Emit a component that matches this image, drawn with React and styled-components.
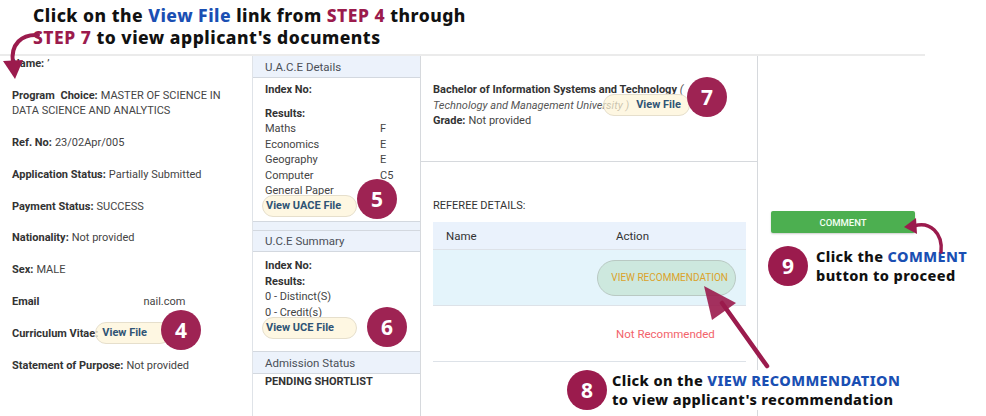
import styled, { createGlobalStyle } from "styled-components";

const GlobalStyle = createGlobalStyle`
  html, body {
    margin: 0;
    padding: 0;
    background: #ffffff;
  }
  * {
    box-sizing: border-box;
  }
`;

const MAROON = "#9b1b4d";
const BLUE = "#1a4fb3";

const Page = styled.div`
  position: relative;
  width: 986px;
  height: 416px;
  overflow: hidden;
  background: #fff;
  font-family: Roboto, "Liberation Sans", sans-serif;
  color: #333;
`;

const Heading = styled.div`
  height: 54px;
  padding: 4px 0 0 33px;
  font-family: "Noto Sans", "Open Sans", sans-serif;
  font-weight: 800;
  font-size: 17.5px;
  line-height: 22px;
  color: #111;
  letter-spacing: 0.5px;
  white-space: nowrap;
`;

const Hl = styled.span`
  color: ${(p) => (p.tone === "blue" ? BLUE : MAROON)};
`;

const Columns = styled.div`
  display: grid;
  grid-template-columns: 252px 169px 337px 167px;
  width: 925px;
  height: 362px;
  border-top: 2px solid #ebebeb;
`;

const InfoCol = styled.div`
  padding: 0 12px;
  font-size: 11px;
`;

const InfoRow = styled.div`
  line-height: 15.5px;
  margin-bottom: 16.3px;
`;

const Label = styled.b`
  font-weight: 700;
  color: #333;
  word-spacing: ${(p) => p.$ws || 0}px;
`;

const Value = styled.span`
  color: #444;
  margin-left: ${(p) => p.$ml || 3}px;
`;

const Pill = styled.span`
  display: inline-block;
  vertical-align: middle;
  height: 22px;
  line-height: 20px;
  margin: -4px 0 -3px ${(p) => p.$ml || 0}px;
  padding: 0 8px 0 ${(p) => p.$pad || 6}px;
  min-width: ${(p) => p.$w || 0}px;
  white-space: nowrap;
  border-radius: 11px;
  background: rgba(253, 243, 214, 0.7);
  border: 1px solid #e6dfcc;
  font-weight: 700;
  font-style: normal;
  color: #2f5475;
  font-size: 11px;
`;

const MidCol = styled.div`
  background: #ecf2fb;
  border-left: 1px solid #dfe3e8;
  border-right: 1px solid #d6d9dd;
  display: flex;
  flex-direction: column;
`;

const SectionHead = styled.div`
  flex: none;
  height: 22px;
  padding: 0 12px;
  display: flex;
  align-items: center;
  font-size: 11.5px;
  color: #4a4f57;
  border-bottom: 1px solid #d3d8df;
  border-top: ${(p) => (p.$top ? "1px solid #d3d8df" : "none")};
`;

const SectionBody = styled.div`
  flex: none;
  background: #fff;
  padding: ${(p) => p.$pt || 4}px 12px 0 12px;
  height: ${(p) => p.$h}px;
  font-size: 11px;
  line-height: 15.5px;
  color: #444;
  border-bottom: ${(p) => (p.$bottom ? "1px solid #d3d8df" : "none")};
  margin-bottom: ${(p) => p.$mb || 0}px;
`;

const Bold = styled.div`
  font-weight: 700;
  color: #333;
  margin-bottom: ${(p) => p.$mb || 0}px;
`;

const GradeGrid = styled.div`
  display: grid;
  grid-template-columns: 115px auto;
`;

const Status = styled.div`
  background: #fff;
  flex: 1;
  padding: 1px 12px;
  font-size: 11px;
  font-weight: 700;
  color: #333;
`;

const DetailCol = styled.div`
  border-right: 1px solid #d6d9dd;
  display: flex;
  flex-direction: column;
`;

const Qualification = styled.div`
  height: 106px;
  padding: 26px 12px 0 12px;
  font-size: 11px;
  line-height: 15.5px;
  color: #444;
  border-bottom: 1px solid #d6d9dd;
`;

const Italic = styled.span`
  font-style: italic;
  color: #555;
`;

const Referees = styled.div`
  padding: 36px 11px 0 12px;
  font-size: 11px;
`;

const RefTitle = styled.div`
  color: #333;
  margin-bottom: 8px;
  line-height: 16px;
`;

const Table = styled.div`
  display: flex;
  flex-direction: column;
`;

const TRow = styled.div`
  display: grid;
  grid-template-columns: 170px 1fr;
  align-items: center;
  height: ${(p) => p.$h}px;
  background: ${(p) => p.$bg || "#fff"};
  border-bottom: 1px solid #dde2e8;
  padding-left: 13px;
  font-size: 11.5px;
  color: #333;
`;

const RecButton = styled.span`
  display: inline-flex;
  align-items: center;
  justify-content: flex-end;
  margin-left: -19px;
  width: 139px;
  height: 36px;
  padding-right: 7px;
  border-radius: 18px;
  background: #cde8de;
  border: 1px solid #b9c9c3;
  color: #dba22a;
  font-size: 10px;
`;

const NotRec = styled.span`
  color: #f2636b;
  font-size: 11.5px;
`;

const ActionCol = styled.div`
  padding: 155px 0 0 10px;
  display: flex;
  flex-direction: column;
`;

const CommentButton = styled.button`
  width: 144px;
  height: 22px;
  margin-left: 3px;
  border: none;
  border-radius: 2px;
  background: #4caf50;
  color: #f4fff4;
  font-family: Roboto, "Liberation Sans", sans-serif;
  font-size: 9.5px;
  font-weight: 500;
  box-shadow: 0 1px 2px rgba(0, 0, 0, 0.2);
`;

const Step = styled.div`
  display: flex;
  align-items: center;
  gap: 8px;
  margin-top: 13px;
  white-space: nowrap;
`;

const Circle = styled.div`
  flex: none;
  width: 40px;
  height: 40px;
  border-radius: 50%;
  background: ${MAROON};
  color: #fff;
  display: flex;
  align-items: center;
  justify-content: center;
  font-family: "Noto Sans", "Open Sans", sans-serif;
  font-weight: 700;
  font-size: 21px;
`;

const Badge = styled(Circle)`
  position: absolute;
  left: ${(p) => p.$x - 20}px;
  top: ${(p) => p.$y - 20}px;
  opacity: 0.96;
`;

const Note = styled.div`
  font-family: "Noto Sans", "Open Sans", sans-serif;
  font-weight: 800;
  font-size: 14.5px;
  letter-spacing: 0.4px;
  line-height: 19px;
  color: #111;
  white-space: nowrap;
`;

const BottomNote = styled.div`
  position: absolute;
  left: 567px;
  top: 370px;
  display: flex;
  align-items: center;
  gap: 5px;
  background: #fff;
`;

const Arrows = styled.svg`
  position: absolute;
  left: 0;
  top: 0;
  pointer-events: none;
`;

export default function App() {
  return (
    <Page>
      <GlobalStyle />
      <Heading>
        Click on the <Hl tone="blue">View File</Hl> link from <Hl>STEP 4</Hl> through
        <br />
        <Hl>STEP 7</Hl> to view applicant's documents
      </Heading>
      <Columns>
        <InfoCol>
          <InfoRow>
            <Label>Name:</Label>
            <Value>ʼ</Value>
          </InfoRow>
          <InfoRow>
            <Label $ws={3}>Program Choice:</Label>
            <Value>MASTER OF SCIENCE IN DATA SCIENCE AND ANALYTICS</Value>
          </InfoRow>
          <InfoRow>
            <Label>Ref. No:</Label>
            <Value>23/02Apr/005</Value>
          </InfoRow>
          <InfoRow>
            <Label>Application Status:</Label>
            <Value>Partially Submitted</Value>
          </InfoRow>
          <InfoRow>
            <Label>Payment Status:</Label>
            <Value>SUCCESS</Value>
          </InfoRow>
          <InfoRow>
            <Label>Nationality:</Label>
            <Value>Not provided</Value>
          </InfoRow>
          <InfoRow>
            <Label>Sex:</Label>
            <Value>MALE</Value>
          </InfoRow>
          <InfoRow>
            <Label>Email</Label>
            <Value $ml={104}>nail.com</Value>
          </InfoRow>
          <InfoRow>
            <Label>Curriculum Vitae:</Label>
            <Pill $ml={-3} $w={76}>View File</Pill>
          </InfoRow>
          <InfoRow>
            <Label>Statement of Purpose:</Label>
            <Value>Not provided</Value>
          </InfoRow>
        </InfoCol>

        <MidCol>
          <SectionHead>U.A.C.E Details</SectionHead>
          <SectionBody $h={144} $pt={4} $bottom $mb={8}>
            <Bold $mb={8}>Index No:</Bold>
            <Bold>Results:</Bold>
            <GradeGrid>
              <span>Maths</span>
              <span>F</span>
              <span>Economics</span>
              <span>E</span>
              <span>Geography</span>
              <span>E</span>
              <span>Computer</span>
              <span>C5</span>
              <span>General Paper</span>
              <span></span>
            </GradeGrid>
            <Pill $ml={-3} $pad={3} $w={95}>View UACE File</Pill>
          </SectionBody>
          <SectionHead $top>U.C.E Summary</SectionHead>
          <SectionBody $h={100} $pt={6} $bottom>
            <Bold>Index No:</Bold>
            <Bold>Results:</Bold>
            <div>0 - Distinct(S)</div>
            <div>0 - Credit(s)</div>
            <Pill $ml={-3} $pad={3} $w={95}>View UCE File</Pill>
          </SectionBody>
          <SectionHead>Admission Status</SectionHead>
          <Status>PENDING SHORTLIST</Status>
        </MidCol>

        <DetailCol>
          <Qualification>
            <Bold as="span">Bachelor of Information Systems and Technology</Bold>{" "}
            <Italic>(</Italic>
            <br />
            <Italic>Technology and Management University )</Italic>
            <Pill $ml={-26} $pad={32}>View File</Pill>
            <div>
              <Label>Grade:</Label>
              <Value>Not provided</Value>
            </div>
          </Qualification>
          <Referees>
            <RefTitle>REFEREE DETAILS:</RefTitle>
            <Table>
              <TRow $h={28} $bg="#eaf2fc">
                <span>Name</span>
                <span>Action</span>
              </TRow>
              <TRow $h={56} $bg="#e4f4fb">
                <span></span>
                <span>
                  <RecButton>VIEW RECOMMENDATION</RecButton>
                </span>
              </TRow>
              <TRow $h={56}>
                <span></span>
                <NotRec>Not Recommended</NotRec>
              </TRow>
            </Table>
          </Referees>
        </DetailCol>

        <ActionCol>
          <CommentButton>COMMENT</CommentButton>
          <Step>
            <Circle>9</Circle>
            <Note>
              Click the <Hl tone="blue">COMMENT</Hl>
              <br />
              button to proceed
            </Note>
          </Step>
        </ActionCol>
      </Columns>

      <Badge $x={181} $y={330}>4</Badge>
      <Badge $x={377} $y={199}>5</Badge>
      <Badge $x={387} $y={327}>6</Badge>
      <Badge $x={707} $y={97}>7</Badge>

      <BottomNote>
        <Circle>8</Circle>
        <Note>
          Click on the <Hl tone="blue">VIEW RECOMMENDATION</Hl>
          <br />
          to view applicant's recommendation
        </Note>
      </BottomNote>

      <Arrows width="986" height="416" viewBox="0 0 986 416">
        <path d="M38 35 C 22 34, 10 44, 13 63" fill="none" stroke={MAROON} strokeWidth="4" strokeLinecap="round" />
        <polygon points="3,61 23,60 15,79" fill={MAROON} />
        <line x1="767" y1="366" x2="722" y2="303" stroke={MAROON} strokeWidth="4.5" strokeLinecap="round" />
        <polygon points="704,286 712,320 736,303" fill={MAROON} opacity="0.9" />
        <path d="M941 252 C 943 233, 930 221, 914 226" fill="none" stroke={MAROON} strokeWidth="3.5" strokeLinecap="round" />
        <polygon points="904,227 916,218 917,234" fill={MAROON} />
      </Arrows>
    </Page>
  );
}
